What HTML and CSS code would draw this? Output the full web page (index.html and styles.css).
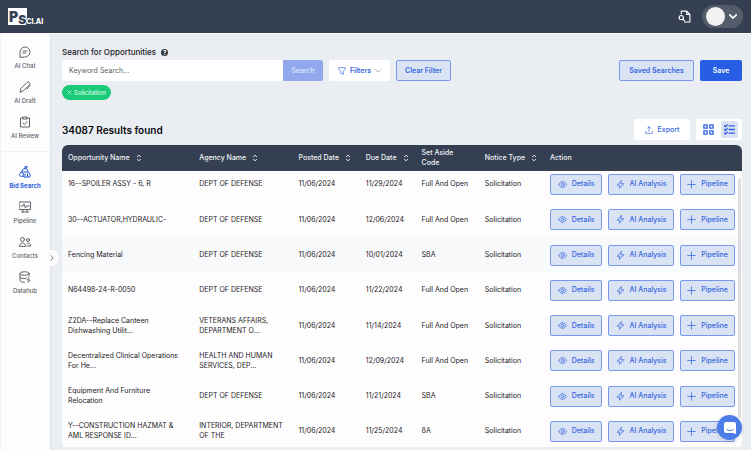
FILE: index.html
```html
<!DOCTYPE html>
<html lang="en">
<head>
<meta charset="utf-8">
<title>Search for Opportunities</title>
<link rel="stylesheet" href="styles.css">
</head>
<body>
<svg class="sprite" aria-hidden="true">
  <symbol id="i-sort" viewBox="0 0 6 8"><path d="M1.200 3 3 1.200 4.800 3M1.200 5 3 6.800 4.800 5"/></symbol>
  <symbol id="i-eye" viewBox="0 0 24 24"><path d="M1.500 12S5 4.500 12 4.500 22.500 12 22.500 12 19 19.500 12 19.500 1.500 12 1.500 12Z"/><circle cx="12" cy="12" r="3.500"/></symbol>
  <symbol id="i-bolt" viewBox="0 0 24 24"><path d="M14 2 3 14h7l-1 8L21 10h-8l1-8Z"/></symbol>
  <symbol id="i-plus" viewBox="0 0 24 24"><path d="M12 2v20M2 12h20"/></symbol>
</svg>
<header class="topbar">
  <a class="logo" href="#" aria-label="PSCI.AI">
    <svg viewBox="0 0 38 20" width="38" height="20">
      <path d="M0 1h19v8l-1 9H0z" fill="#fff"/>
      <text x="1" y="15"><tspan class="logo-big">P</tspan><tspan dy="2" class="logo-s">S</tspan><tspan class="logo-small">CI.AI</tspan></text>
    </svg>
  </a>
  <div class="topbar-tools">
    <button class="plain" aria-label="Search documents">
      <svg class="ic" viewBox="0 0 24 24" width="13" height="13"><path d="M6 7V2h10l6 6v14H12M16 2v6h6"/><circle cx="6" cy="14" r="4"/><path d="m9 17 3 3"/></svg>
    </button>
    <button class="account" aria-label="Account menu">
      <span class="avatar"></span>
      <svg class="ic" viewBox="0 0 10 6" width="8" height="5"><path d="m1 1 4 4 4-4"/></svg>
    </button>
  </div>
</header>
<div class="shell">
  <nav class="sidebar">
    <div class="group">
      <a href="#"><svg class="ic" viewBox="0 0 24 24"><path d="M2 22V12a10 10 0 1 1 10 10ZM8 10h8M8 14h5"/></svg>AI Chat</a>
      <a href="#"><svg class="ic" viewBox="0 0 24 24"><path d="M2 22 4 15 16 3a3 3 0 0 1 5 5L9 19ZM22 9l-6 7"/></svg>AI Draft</a>
      <a href="#"><svg class="ic" viewBox="0 0 24 24"><path d="M8 4H3v18h18V4h-5M8 2h8v4H8ZM8 14l3 3 5-6"/></svg>AI Review</a>
    </div>
    <div class="group">
      <a href="#" class="active"><svg class="ic" viewBox="0 0 24 24"><path d="M6 11a6 6 0 0 1 12 0M12 5V1h4v3h-4M4 12h15l3 4v6H12M12 16v5M17 16v5"/><circle cx="5" cy="17" r="4"/><path d="m8 20 3 3"/></svg>Bid Search</a>
      <a href="#"><svg class="ic" viewBox="0 0 24 24"><path d="M1 2h22v15H1ZM4 10h4l2-4 3 8 2-4h5M8 17v5M16 17v5M5 22h14"/></svg>Pipeline</a>
      <a href="#"><svg class="ic" viewBox="0 0 24 24"><circle cx="7" cy="7" r="4"/><circle cx="18" cy="8" r="3"/><path d="M1 20c0-8 12-8 12 0ZM16 20h7c0-6-4-7-7-5"/></svg>Contacts</a>
      <a href="#"><svg class="ic" viewBox="0 0 24 24"><ellipse cx="11" cy="5" rx="9" ry="3.500"/><path d="M2 5v14c0 2 4 3.500 9 3.500M20 5v5M2 12c0 4 11 4 13 2M20 13l-4 5h6l-4 5"/></svg>Datahub</a>
    </div>
    <button class="expand" aria-label="Expand sidebar"><svg class="ic" viewBox="0 0 6 10"><path d="m1 1 4 4-4 4"/></svg></button>
  </nav>
  <main>
    <label class="title" for="q">Search for Opportunities <span class="help">?</span></label>
    <div class="bar">
      <form class="search"><input id="q" type="text" placeholder="Keyword Search..."><button type="button">Search</button></form>
      <button class="btn white filters"><svg class="ic" viewBox="0 0 24 24" width="8" height="8"><path d="M2 2h20v4l-6 7v9l-8-3v-6L2 6Z"/></svg>Filters<svg class="ic chev" viewBox="0 0 10 6" width="6" height="4"><path d="m1 1 4 4 4-4"/></svg></button>
      <button class="btn tint">Clear Filter</button>
      <span class="spacer"></span>
      <button class="btn tint saved">Saved Searches</button>
      <button class="btn solid">Save</button>
    </div>
    <button class="chip"><svg class="ic" viewBox="0 0 8 8" width="5" height="5"><path d="m1 1 6 6M7 1 1 7"/></svg>Solicitation</button>
    <div class="results">
      <h1>34087 Results found</h1>
      <button class="btn white export"><svg class="ic" viewBox="0 0 24 24" width="8" height="8"><path d="M12 16V2M7 7l5-5 5 5M2 16v6h20v-6"/></svg>Export</button>
      <div class="views">
        <button aria-label="Grid view"><svg class="ic" viewBox="0 0 24 24" width="11" height="11"><path d="M2 2h7v7H2ZM15 2h7v7h-7ZM2 15h7v7H2ZM15 15h7v7h-7Z"/></svg></button>
        <button class="on" aria-label="List view"><svg class="ic" viewBox="0 0 24 24" width="11" height="11"><path d="m1 4 2 2 4-4M1 12l2 2 4-4M1 20l2 2 4-4M11 4h12M11 12h12M11 20h12"/></svg></button>
      </div>
    </div>
    <div class="table-wrap">
      <table>
        <colgroup><col class="c1"><col class="c2"><col class="c3"><col class="c4"><col class="c5"><col class="c6"><col></colgroup>
        <thead><tr>
          <th>Opportunity Name<svg class="sort"><use href="#i-sort"/></svg></th>
          <th>Agency Name<svg class="sort"><use href="#i-sort"/></svg></th>
          <th>Posted Date<svg class="sort"><use href="#i-sort"/></svg></th>
          <th>Due Date<svg class="sort"><use href="#i-sort"/></svg></th>
          <th>Set Aside<br>Code</th>
          <th>Notice Type<svg class="sort"><use href="#i-sort"/></svg></th>
          <th>Action</th>
        </tr></thead>
        <tbody id="rows"></tbody>
      </table>
      <span class="scrollbar"></span>
    </div>
  </main>
</div>
<button class="chat" aria-label="Open chat"><svg viewBox="0 0 14 14" width="14" height="14"><path d="M3 1h8a2 2 0 0 1 2 2v10l-3-1H3a2 2 0 0 1-2-2V3a2 2 0 0 1 2-2Z" fill="#fff"/><path d="M3.500 8.500q3.500 2.500 7 0" fill="none" stroke="#4c7ce8"/></svg></button>
<script src="app.js"></script>
</body>
</html>
```
FILE: styles.css
```css
* { box-sizing: border-box; }
body {
  margin: 0;
  height: 100vh;
  display: flex;
  flex-direction: column;
  overflow: hidden;
  background: #eaeef3;
  color: #1d2025;
  font: 7px/10px Inter, sans-serif;
}
button, input { font: inherit; color: inherit; border: 0; margin: 0; padding: 0; background: none; }
button { cursor: pointer; }
a { color: inherit; text-decoration: none; }
svg { flex: none; }
.sprite { display: none; }
.ic { fill: none; stroke: currentColor; stroke-width: 2; stroke-linecap: round; stroke-linejoin: round; }
svg[viewBox="0 0 10 6"], svg[viewBox="0 0 6 10"], svg[viewBox="0 0 8 8"] { stroke-width: 1; }

.topbar {
  flex: none;
  height: 34px;
  padding: 0 8px;
  display: flex;
  align-items: center;
  justify-content: space-between;
  background: #353f52;
  border-bottom: 1px solid #f8fafc;
}
.logo, .topbar-tools, .plain { display: flex; align-items: center; }
.logo-big { font: 900 14px Inter, sans-serif; fill: #353f52; }
.logo-s { font: 900 12px Inter, sans-serif; fill: #353f52; stroke: #fff; stroke-width: 1; paint-order: stroke; }
.logo-small { font: 800 7px Inter, sans-serif; fill: #fff; }
.topbar-tools { gap: 11px; color: #fff; }
.account {
  width: 41px;
  height: 23px;
  padding: 0 6px 0 4px;
  border-radius: 12px;
  background: #535c68;
  display: flex;
  align-items: center;
  justify-content: space-between;
}
.account .ic { stroke-width: 2; }
.avatar { width: 19px; height: 19px; border-radius: 50%; background: #f2f2f3; }

.shell { flex: 1; min-height: 0; display: flex; }
.sidebar {
  position: relative;
  flex: none;
  width: 51px;
  padding: 12px 1px 0 0;
  background: #fdfdfe;
  border-left: 1px solid #f1f3f5;
  border-right: 1px solid #dfe3e9;
  color: #5f636a;
}
.group + .group { border-top: 1px solid #eff1f4; padding-top: 14px; }
.group a {
  height: 35px;
  display: flex;
  flex-direction: column;
  align-items: center;
  gap: 3px;
  font-size: 6px;
  font-weight: 500;
  white-space: nowrap;
}
.group a svg { width: 12px; height: 12px; }
.group a.active { color: #2f60e0; font-weight: 700; }
.expand {
  position: absolute;
  right: -9px;
  top: 216px;
  width: 15px;
  height: 16px;
  border-radius: 50%;
  background: #fdfdfe;
  color: #222;
}
.expand svg { width: 4px; height: 6px; margin: auto; display: block; }

main { flex: 1; min-width: 0; padding: 13px 9px 3px 11px; display: flex; flex-direction: column; }
.title { display: flex; align-items: center; gap: 5px; font-size: 8px; font-weight: 500; }
.help {
  width: 7px;
  height: 7px;
  border-radius: 50%;
  background: #33363b;
  color: #fff;
  font: 700 6px/7px Inter, sans-serif;
  text-align: center;
}
.bar { margin-top: 3px; display: flex; gap: 6px; }
.search { display: flex; flex: 0 1 261px; }
.search input {
  flex: 1;
  min-width: 0;
  padding: 0 7px;
  background: #fff;
  border-radius: 3px 0 0 3px;
  outline: 0;
}
.search input::placeholder { color: #5b5f66; opacity: 1; }
.search button { width: 40px; background: #91a9ec; color: #dce5fb; font-weight: 500; border-radius: 0 2px 2px 0; }
.btn {
  height: 21px;
  padding: 0 8px;
  border-radius: 2px;
  display: flex;
  align-items: center;
  justify-content: center;
  gap: 5px;
  font-weight: 500;
  white-space: nowrap;
  color: #3565df;
}
.bar .btn { font-weight: 600; }
.white { background: #fff; }
.filters { width: 61px; gap: 4px; }
.chev { color: #71757c; }
.tint { background: #d9e3f4; border: 1px solid #7898ef; }
.saved { width: 75px; }
.solid { width: 42px; background: #285ee5; color: #fff; }
.spacer { flex: 1; }
.chip {
  align-self: flex-start;
  height: 15px;
  margin-top: 4px;
  padding: 0 5px;
  border-radius: 8px;
  background: #19cb76;
  color: #dcfbea;
  display: flex;
  align-items: center;
  gap: 2px;
  font-size: 6px;
  font-weight: 500;
}
.results { margin-top: 19px; display: flex; align-items: center; gap: 6px; }
h1 { flex: 1; margin: 0; font-size: 10px; line-height: 14px; font-weight: 600; color: #08090b; }
.export { width: 56px; }
.views { height: 21px; width: 46px; padding: 2px 4px; background: #fff; border-radius: 2px; display: flex; justify-content: space-between; }
.views button { width: 17px; display: flex; align-items: center; justify-content: center; color: #2f60e0; border-radius: 2px; }
.views .ic { stroke-width: 3; }
.views .on { background: #d9e3f4; }

.table-wrap { position: relative; flex: 1; min-height: 0; margin-top: 5px; overflow: hidden; border-radius: 6px 6px 3px 3px; background: #fdfdfe; }
table { width: 100%; height: calc(100% + 2px); table-layout: fixed; border-collapse: collapse; }
.c1 { width: 19.3%; }
.c2 { width: 14.6%; }
.c3 { width: 9.9%; }
.c4 { width: 8.2%; }
.c5 { width: 9.3%; }
.c6 { width: 9.6%; }
th, td { padding: 0 6px; text-align: left; vertical-align: middle; }
th { height: 26px; background: #353f52; color: #f0f2f6; font-weight: 500; white-space: nowrap; }
.sort { width: 6px; height: 8px; margin-left: 6px; vertical-align: -2px; fill: none; stroke: currentColor; stroke-width: 1; }
td { height: 35px; white-space: nowrap; }
tbody tr:first-child td { height: 31px; padding-bottom: 5px; }
tbody tr:nth-child(3) { background: #f8f9fb; }
.actions { display: flex; gap: 6px; }
.actions .btn { width: 52px; padding: 0; }
.actions .btn svg { width: 9px; height: 9px; }
.actions .btn:nth-child(2) { width: 66px; }
.actions .btn:nth-child(3) { width: 55px; }
.scrollbar { position: absolute; right: 1px; top: 33px; width: 3px; height: 240px; border-radius: 2px; background: #dcdddf; }
.chat {
  position: fixed;
  right: 9px;
  bottom: 10px;
  width: 25px;
  height: 25px;
  border-radius: 50%;
  background: #4c7ce8;
  box-shadow: 0 1px 5px #0002;
  display: flex;
  align-items: center;
  justify-content: center;
}
```
FILE: app.js
```js
const rows = [
  ["16--SPOILER ASSY - 6, R", "DEPT OF DEFENSE", "11/29/2024", "Full And Open"],
  ["30--ACTUATOR,HYDRAULIC-", "DEPT OF DEFENSE", "12/06/2024", "Full And Open"],
  ["Fencing Material", "DEPT OF DEFENSE", "10/01/2024", "SBA"],
  ["N64498-24-R-0050", "DEPT OF DEFENSE", "11/22/2024", "Full And Open"],
  ["Z2DA--Replace Canteen<br>Dishwashing Utilit...", "VETERANS AFFAIRS,<br>DEPARTMENT O...", "11/14/2024", "Full And Open"],
  ["Decentralized Clinical Operations<br>For He...", "HEALTH AND HUMAN<br>SERVICES, DEP...", "12/09/2024", "Full And Open"],
  ["Equipment And Furniture<br>Relocation", "DEPT OF DEFENSE", "11/21/2024", "SBA"],
  ["Y--CONSTRUCTION HAZMAT &amp;<br>AML RESPONSE ID...", "INTERIOR, DEPARTMENT<br>OF THE", "11/25/2024", "8A"]
];
const action = (icon, label) =>
  `<button class="btn tint"><svg class="ic"><use href="#i-${icon}"/></svg>${label}</button>`;
document.getElementById("rows").innerHTML = rows.map(([name, agency, due, code]) =>
  `<tr><td>${name}</td><td>${agency}</td><td>11/06/2024</td><td>${due}</td><td>${code}</td><td>Solicitation</td>
  <td><div class="actions">${action("eye", "Details")}${action("bolt", "AI Analysis")}${action("plus", "Pipeline")}</div></td></tr>`
).join("");
```
